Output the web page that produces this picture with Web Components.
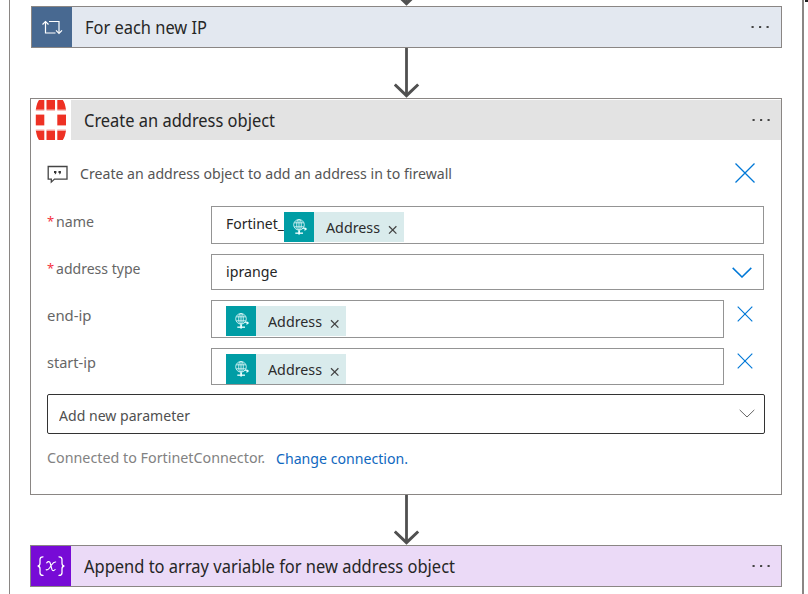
<!DOCTYPE html>
<html lang="en">
<head>
<meta charset="utf-8">
<title>Workflow designer</title>
<style>
html,body{margin:0;height:594px;overflow:hidden;background:#fff}
body{font-family:"Noto Sans","Open Sans",sans-serif;font-size:14.5px;color:#333}
</style>
</head>
<body>
<flow-canvas>
  <flow-arrow length="6"></flow-arrow>
  <step-card style="--indent:21px;--tile:#486991;--bar:#e3e8f0;--title-x:12.5px;--dots:11px" label="For each new IP" label-width="122">
    <ui-icon slot="icon" name="loop"></ui-icon>
  </step-card>
  <flow-arrow length="50"></flow-arrow>
  <step-card style="--tile:#fff;--bar:#e3e3e3;--top-gap:1px" label="Create an address object" label-width="191">
    <ui-icon slot="icon" name="fortinet"></ui-icon>
    <step-form></step-form>
  </step-card>
  <flow-arrow length="50"></flow-arrow>
  <step-card style="--tile:#770bd6;--bar:#ebdaf7" label="Append to array variable for new address object" label-width="371">
    <ui-icon slot="icon" name="variable"></ui-icon>
  </step-card>
</flow-canvas>
<script>
const define = (name, cls) => customElements.define(name, cls);

// Text run condensed horizontally so that it fills the width given in "w".
define('fit-text', class extends HTMLElement {
  connectedCallback() {
    if (this.shadowRoot) return;
    const root = this.attachShadow({mode: 'open'});
    root.innerHTML = `<style>:host{display:block;flex:none;white-space:pre}span{display:inline-block;transform-origin:0 50%}</style><span></span>`;
    const span = root.querySelector('span');
    const text = this.getAttribute('text');
    span.textContent = text;
    const w = parseFloat(this.getAttribute('w'));
    const natural = span.getBoundingClientRect().width;
    if (natural) span.style.transform = `scaleX(${(w / natural).toFixed(4)})`;
    this.style.width = w + 'px';
  }
});

const icons = {
  loop: [40, 40, `<g fill="none" stroke="#fff" stroke-width="1.2"><path d="M13.5 14.5v11.500h10M17 14.500h10v11.500"/><path d="M10.500 17.500l3-3 3 3M24 23.300l3 3 3-3"/></g>`],
  fortinet: [40, 40, `<g fill="#ee3124"><path d="M8 0h5.300v9.800H4.800C5.500 5 6.500 2 8 0zM15.500 0h8.500v9.800h-8.500zM26.300 0h5.500c1.500 2 2.500 5 3.200 9.800h-8.700zM4.800 15h8.500v10H4.800zM26.300 15H35v10h-8.700zM4.800 30.500h8.500V40H8c-1.500-2-2.500-5-3.200-9.500zM15.500 30.500h8.500V40h-8.500zM26.300 30.500H35c-.7 4.500-1.700 7.500-3.200 9.500h-5.500z"/></g><path fill="#f9aaa5" d="M4.800 9.800h8.500v1H4.800zM15.500 9.800H24v1h-8.500zM26.300 9.800H35v1h-8.700zM4.800 14h8.500v1H4.800zM26.300 14H35v1h-8.700zM4.800 25h8.500v1H4.800zM26.300 25H35v1h-8.700zM4.800 29.500h8.500v1H4.800zM15.500 29.500H24v1h-8.500zM26.300 29.500H35v1h-8.700z"/>`],
  variable: [40, 40, `<g fill="none" stroke="#fff" stroke-width="1.300" stroke-linecap="round"><path d="M12 10.800c-2.500 0-3 .8-3 2.700v3.700c0 1.800-.7 2.600-2.300 2.800 1.600.2 2.300 1 2.300 2.800v3.900c0 1.900.5 2.700 3 2.700M28 10.800c2.500 0 3 .8 3 2.700v3.700c0 1.800.7 2.600 2.300 2.800-1.600.2-2.300 1-2.300 2.800v3.900c0 1.900-.5 2.700-3 2.700"/><path stroke-width="1.150" d="M15.700 16.800c1.300-1.700 3-1.500 3.500.2l1.700 6.300c.5 1.700 2 1.700 3.200.2M24.700 16c-1.800-.4-3 1.200-4.200 3l-2 3c-1.200 1.700-2 2.300-3.300 1.700"/></g>`],
  dots: [20, 6, `<g fill="#444"><rect x="1.500" y="2" width="2.200" height="2" rx=".5"/><rect x="9" y="2" width="2.200" height="2" rx=".5"/><rect x="16.500" y="2" width="2.200" height="2" rx=".5"/></g>`],
  comment: [22, 20, `<path d="M1.200 1.500h18.800v12.600H7.500l-3.200 3v-3H1.200z" fill="none" stroke="#444" stroke-width="1.300"/><path fill="#333" d="M7 6h2.400v2L8.400 9.300h-.8l.4-1.300H7zM11.500 6h2.400v2l-1 1.300h-.8l.4-1.300h-1z"/>`],
  bigx: [20, 20, `<path d="M.5.500l19 19M19.500.500l-19 19" stroke="#0078d7" stroke-width="1.250"/>`],
  x: [16, 16, `<path d="M.7.700l14.600 14.600M15.300.700L.7 15.300" stroke="#0078d7" stroke-width="1.150"/>`],
  blueDown: [20, 11, `<path d="M.7.900L10 10 19.300.900" fill="none" stroke="#0078d7" stroke-width="1.500"/>`],
  greyDown: [16, 9, `<path d="M.7.900L8 8 15.300.900" fill="none" stroke="#666" stroke-width="1"/>`],
  smallx: [10, 10, `<path d="M1 1.200l7.400 7.400M8.400 1.200L1 8.600" stroke="#444" stroke-width="1.250"/>`],
  globe: [30, 30, `<g fill="none" stroke="#d5f3f4" stroke-width=".9"><circle cx="15" cy="12.800" r="5.300"/><ellipse cx="15" cy="12.800" rx="2.300" ry="5.300"/><path d="M10.200 10.800h9.600M10.200 14.800h9.600M15 7.500v10.500M18 16.500h3.500"/><path d="M11.300 21.200h7.700" stroke-width="1.500"/></g><path fill="#e8ffff" d="M20.500 15l2.700 2-2.700 2zM14.200 18.500h1.800v3.900h-1.800z"/>`]
};
define('ui-icon', class extends HTMLElement {
  connectedCallback() {
    if (this.shadowRoot) return;
    const [w, h, body] = icons[this.getAttribute('name')];
    this.attachShadow({mode: 'open'}).innerHTML =
      `<style>:host{display:block;flex:none;width:${w}px;height:${h}px}svg{display:block}</style><svg width="${w}" height="${h}" viewBox="0 0 ${w} ${h}">${body}</svg>`;
  }
});

// Connector that ends in an open arrowhead.
define('flow-arrow', class extends HTMLElement {
  connectedCallback() {
    const n = +this.getAttribute('length');
    this.attachShadow({mode: 'open'}).innerHTML =
      `<style>:host{display:block;height:${n}px;padding-left:384px}svg{display:block}</style>
       <svg width="26" height="${n}" viewBox="0 0 26 ${n}"><g fill="none" stroke="#505050"><path stroke-width="2.800" d="M12.500 0V${n - 2}"/><path stroke-width="3" d="M.8 ${n - 13.500}L12.500 ${n - 2.400} 24.200 ${n - 13.500}"/></g></svg>`;
  }
});

define('flow-canvas', class extends HTMLElement {
  constructor() {
    super();
    this.attachShadow({mode: 'open'}).innerHTML = `<style>
      :host{display:flex;height:594px;width:808px;box-sizing:border-box;padding-left:9px}
      main{box-sizing:border-box;width:795px;height:594px;border-left:1px solid #8a8684;border-right:2px solid #8a8684}
      i{width:3px;height:2px;margin-left:1px;background:#222}
    </style><main><slot></slot></main><i></i>`;
  }
});

define('step-card', class extends HTMLElement {
  connectedCallback() {
    this.attachShadow({mode: 'open'}).innerHTML = `<style>
      :host{display:block;box-sizing:border-box;margin-left:var(--indent,20px);margin-right:20px;border:1px solid #8a8684;background:#fff;padding-top:var(--top-gap,0)}
      header{display:flex;height:40px;background:var(--bar)}
      .tile{width:40px;background:var(--tile)}
      fit-text{margin-left:var(--title-x,12.500px);font-size:17.500px;line-height:40px;color:#262626}
      .dots{margin:17px var(--dots,10px) 0 auto}
    </style><header><div class="tile"><slot name="icon"></slot></div>
      <fit-text text="${this.getAttribute('label')}" w="${this.getAttribute('label-width')}"></fit-text>
      <ui-icon class="dots" name="dots"></ui-icon></header><slot></slot>`;
  }
});

define('value-token', class extends HTMLElement {
  connectedCallback() {
    this.attachShadow({mode: 'open'}).innerHTML = `<style>
      :host{display:flex;flex:none;width:120px;height:30px;background:#d9ebec}
      .tile{background:#009da5}
      fit-text{margin-left:12px;line-height:30px;color:#2c2c2c}
      .close{margin:13px 0 0 7.500px}
    </style><ui-icon class="tile" name="globe"></ui-icon><fit-text text="Address" w="54"></fit-text><ui-icon class="close" name="smallx"></ui-icon>`;
  }
});

define('form-row', class extends HTMLElement {
  connectedCallback() {
    const h = +this.getAttribute('height');
    const removable = this.hasAttribute('removable');
    const req = this.hasAttribute('required') ? '<span>*</span>' : '';
    this.attachShadow({mode: 'open'}).innerHTML = `<style>
      :host{display:grid;grid-template-columns:164px ${removable ? 513 : 553}px auto;height:${h}px}
      .label{display:flex;height:${this.getAttribute('label-height')}px;align-items:center;color:#666}
      span{width:8.500px;color:#f5333f;font-size:13px}
      .field{box-sizing:border-box;display:flex;height:${h}px;border:1px solid #949494;padding-left:14px}
      .remove{margin:${this.getAttribute('x-top')}px 0 0 13px}
    </style><div class="label">${req}<fit-text text="${this.getAttribute('label')}" w="${this.getAttribute('label-width')}"></fit-text></div>
    <div class="field"><slot></slot></div>${removable ? '<ui-icon class="remove" name="x"></ui-icon>' : ''}`;
  }
});

define('step-form', class extends HTMLElement {
  constructor() {
    super();
    this.attachShadow({mode: 'open'}).innerHTML = `<style>
      :host{display:block;height:354px;box-sizing:border-box;padding:22px 16px 0}
      .about{display:flex;height:44px}
      .about fit-text{margin-left:10.500px;line-height:22px;color:#555}
      .about .c{margin-top:3px}
      .about .d{margin:1px 10px 0 auto}
      .rows{display:grid;row-gap:10px}
      .val{color:#262626;line-height:33px}
      .t{margin-top:5px}
      .down{margin:12px 11px 0 auto}
      .add{box-sizing:border-box;width:718px;height:40px;margin-top:9px;border:1px solid #333;border-radius:2px;display:flex;padding:0 9px 0 11px;color:#505050}
      .add fit-text{line-height:41px}
      .add ui-icon{margin:14px 0 0 auto}
      .foot{display:flex;margin-top:13px;line-height:21px;color:#828282}
      .link{margin:1px 0 0 11px;color:#1068c0}
    </style>
    <div class="about"><ui-icon class="c" name="comment"></ui-icon><fit-text text="Create an address object to add an address in to firewall" w="372"></fit-text><ui-icon class="d" name="bigx"></ui-icon></div>
    <div class="rows">
      <form-row height="38" label-height="30" label="name" label-width="38" required><fit-text class="val" text="Fortinet_" w="58"></fit-text><value-token class="t"></value-token></form-row>
      <form-row height="36" label-height="28" label="address type" label-width="84.500" required><fit-text class="val" text="iprange" w="51.500"></fit-text><ui-icon class="down" name="blueDown"></ui-icon></form-row>
      <form-row height="38" label-height="30" label="end-ip" label-width="44.500" removable x-top="6"><value-token class="t"></value-token></form-row>
      <form-row height="37" label-height="28" label="start-ip" label-width="49" removable x-top="5"><value-token class="t"></value-token></form-row>
    </div>
    <div class="add"><fit-text text="Add new parameter" w="131"></fit-text><ui-icon name="greyDown"></ui-icon></div>
    <div class="foot"><fit-text text="Connected to FortinetConnector." w="218"></fit-text><fit-text class="link" text="Change connection." w="132"></fit-text></div>`;
  }
});
</script>
</body>
</html>
